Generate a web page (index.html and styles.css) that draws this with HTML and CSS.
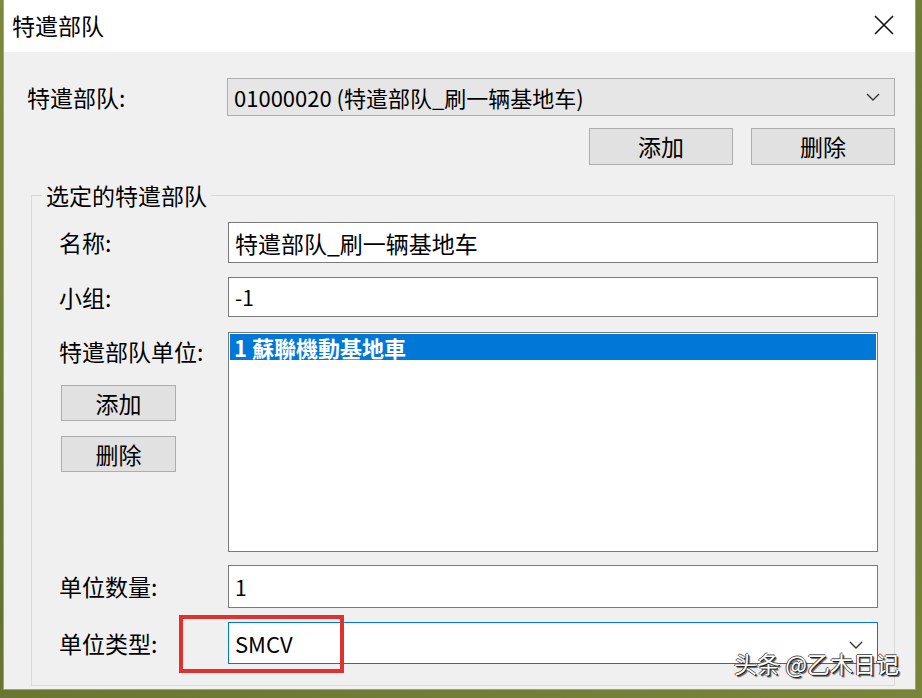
FILE: index.html
```html
<!DOCTYPE html>
<html lang="zh-CN">
<head>
  <meta charset="UTF-8" />
  <title>特遣部队</title>
  <link rel="stylesheet" href="styles.css">
</head>
<body>

  <div class="window">
    <!-- Barra de título -->
    <div class="titlebar">
      <span class="title">特遣部队</span>
      <svg class="close" width="22" height="22" viewBox="0 0 22 22">
        <path d="M2 2 L20 20 M20 2 L2 20" stroke="#111" stroke-width="1.6" fill="none"/>
      </svg>
    </div>

    <div class="dlg-body">
      <div class="top-row">
        <label class="lbl">特遣部队:</label>
        <div class="combo combo-top">
          <span>01000020 (特遣部队_刷一辆基地车)</span>
          <svg class="chev" width="14" height="8" viewBox="0 0 14 8">
            <path d="M1 1 L7 7 L13 1" stroke="#333" stroke-width="1.4" fill="none"/>
          </svg>
        </div>
      </div>

      <div class="top-buttons">
        <button class="btn btn-wide">添加</button>
        <button class="btn btn-wide">删除</button>
      </div>

      <div class="group">
        <span class="legend">选定的特遣部队</span>
        <div class="group-grid">
          <label class="lbl">名称:</label>
          <div class="field field-name">特遣部队_刷一辆基地车</div>

          <label class="lbl">小组:</label>
          <div class="field field-group">-1</div>

          <div class="units-side">
            <label class="lbl">特遣部队单位:</label>
            <button class="btn btn-small">添加</button>
            <button class="btn btn-small">删除</button>
          </div>
          <div class="listbox">
            <div class="list-item selected">1 蘇聯機動基地車</div>
          </div>

          <label class="lbl">单位数量:</label>
          <div class="field field-count">1</div>

          <label class="lbl">单位类型:</label>
          <div class="combo combo-focus">
            <span>SMCV</span>
            <svg class="chev" width="14" height="8" viewBox="0 0 14 8">
              <path d="M1 1 L7 7 L13 1" stroke="#333" stroke-width="1.4" fill="none"/>
            </svg>
          </div>
        </div>
      </div>
    </div>

    <!-- Anotación roja y marca de agua -->
    <div class="red-mark"></div>
    <div class="watermark">头条 @乙木日记</div>
  </div>

</body>
</html>
```

FILE: styles.css
```css
:root {
  --fondo: #f0f0f0;
  --borde-input: #7a7a7a;
  --borde-btn: #adadad;
  --azul: #0078d7;
  --fuente-base: "Noto Sans CJK SC", "Noto Sans", sans-serif;
}
* { box-sizing: border-box; margin: 0; padding: 0; }
body {
  background: linear-gradient(160deg, #7d8a3c, #66732f 60%, #7a853a);
  font-family: var(--fuente-base);
  color: #000;
  height: 698px;
  overflow: hidden;
}

.window {
  position: relative;
  margin-left: 3px;
  width: 913px;
  height: 690px;
  background: var(--fondo);
  border-left: 1px solid #9aa08a;
  border-right: 1px solid #9aa08a;
  border-bottom: 1px solid #9aa08a;
  display: flex;
  flex-direction: column;
}

.titlebar {
  height: 52px;
  background: #fff;
  display: flex;
  align-items: center;
  justify-content: space-between;
  padding: 0 20px 2px 8px;
  flex-shrink: 0;
}
.title {
  font-size: 23px;
  line-height: 1;
}

.dlg-body {
  padding: 26px 20px 0 23px;
  flex: 1;
  display: flex;
  flex-direction: column;
}

.lbl {
  font-size: 23px;
  line-height: 1;
}

.top-row {
  display: grid;
  grid-template-columns: 200px 668px;
  align-items: center;
}

.combo {
  height: 38px;
  display: flex;
  align-items: center;
  justify-content: space-between;
  padding: 0 14px 0 6px;
  font-size: 22px;
}
.combo-top {
  background: #e6e6e6;
  border: 1px solid var(--borde-btn);
}
.combo-focus {
  height: 42px;
  background: #fff;
  border: 1px solid var(--azul);
  padding-right: 14px;
}
.combo-focus .chev { margin-top: 4px; }

.top-buttons {
  display: flex;
  justify-content: flex-end;
  gap: 18px;
  margin-top: 12px;
}
.btn {
  background: #e1e1e1;
  border: 1px solid var(--borde-btn);
  font-family: var(--fuente-base);
  font-size: 23px;
  line-height: 1;
  color: #000;
}
.btn-wide {
  width: 144px;
  height: 37px;
}
.btn-small {
  width: 115px;
  height: 36px;
}

.group {
  margin: 30px 0 0 4px;
  border: 1px solid #d9d9d9;
  height: 491px;
}
.legend {
  display: block;
  width: fit-content;
  background: var(--fondo);
  margin: -14px 0 0 10px;
  padding: 0 4px;
  font-size: 23px;
  line-height: 27px;
}

.group-grid {
  display: grid;
  grid-template-columns: 169px 650px;
  grid-template-rows: 41px 40px 220px 43px 42px;
  row-gap: 14px;
  align-items: center;
  padding-left: 27px;
  margin-top: 13px;
}
.group-grid > :nth-child(5),
.group-grid > :nth-child(6) {
  margin-top: 2px;
}

.field {
  height: 100%;
  background: #fff;
  border: 1px solid var(--borde-input);
  display: flex;
  align-items: center;
  padding-left: 6px;
  font-size: 23px;
}
.field-group,
.field-count {
  font-size: 21px;
}

.units-side {
  align-self: start;
  display: flex;
  flex-direction: column;
  align-items: flex-start;
  gap: 15px;
  padding-top: 7px;
}
.units-side .btn-small { margin-left: 2px; }
.units-side .lbl { margin-bottom: 7px; }

.listbox {
  height: 100%;
  background: #fff;
  border: 1px solid var(--borde-input);
  padding: 1px;
}
.list-item {
  height: 26px;
  font-family: "Noto Sans CJK TC", sans-serif;
  font-size: 22px;
  font-weight: 700;
  line-height: 26px;
  padding-left: 4px;
}
.list-item.selected {
  background: var(--azul);
  color: #fff;
}

.red-mark {
  position: absolute;
  left: 175px;
  top: 615px;
  width: 165px;
  height: 58px;
  border: 4px solid #e0312f;
}

.watermark {
  position: absolute;
  left: 730px;
  top: 648px;
  font-size: 23px;
  line-height: 30px;
  color: #fff;
  text-shadow: 1px 1px 0 #222, -1px 0 0 #555, 0 -1px 0 #555, 2px 2px 1px rgba(0,0,0,0.6);
}
```
